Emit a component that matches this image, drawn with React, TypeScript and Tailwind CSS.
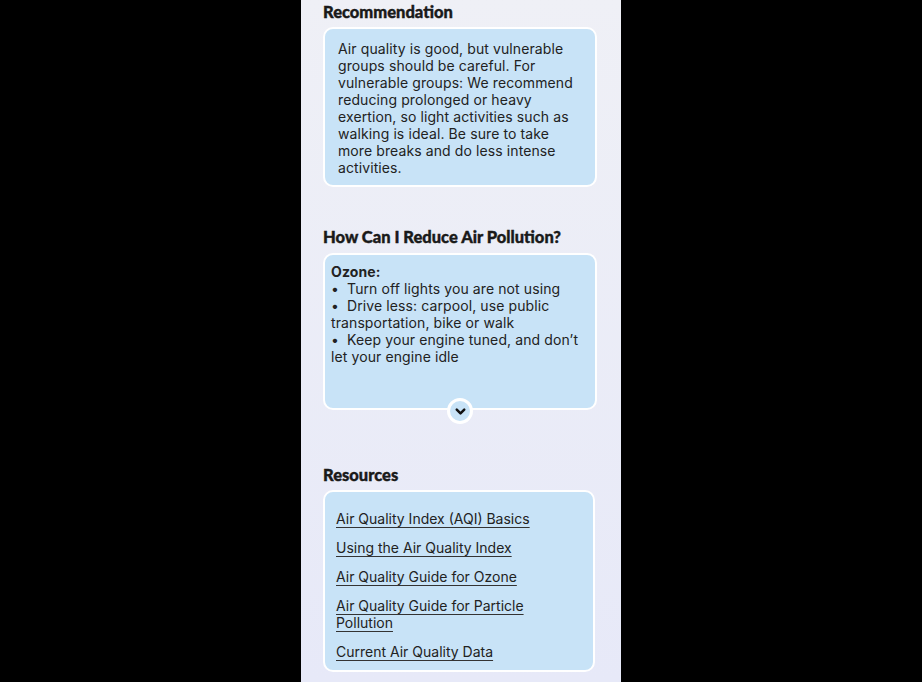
import { ChevronDown } from 'lucide-react';

const heading = "font-['Lato',sans-serif] font-black text-[16.5px] leading-6 text-[#1a1a1a] [-webkit-text-stroke:0.4px_#1a1a1a]";
const card = "bg-[#c8e3f7] border-2 border-white rounded-[10px] text-[14px] leading-[17px] text-[#222]";

const links = [
  'Air Quality Index (AQI) Basics',
  'Using the Air Quality Index',
  'Air Quality Guide for Ozone',
  'Air Quality Guide for Particle Pollution',
  'Current Air Quality Data',
];

const tips = [
  'Turn off lights you are not using',
  'Drive less: carpool, use public transportation, bike or walk',
  'Keep your engine tuned, and don’t let your engine idle',
];

export default function App() {
  return (
    <div className="w-full h-[682px] bg-black flex justify-center overflow-hidden font-['Inter',sans-serif]">
      <div className="w-[320px] h-full bg-gradient-to-b from-[#eff0f6] to-[#e7e9f8] pl-[22px] pr-[24px]">
        <h2 className={heading}>Recommendation</h2>
        <div className={`${card} tracking-[0.1px] mt-[3px] pt-[11px] pb-[9px] pl-[13px] pr-[13px]`}>
          Air quality is good, but vulnerable groups should be careful. For vulnerable groups: We
          recommend reducing prolonged or heavy exertion, so light activities such as walking is
          ideal. Be sure to take more breaks and do less intense activities.
        </div>

        <h2 className={`${heading} mt-[38px]`}>How Can I Reduce Air Pollution?</h2>
        <div className={`${card} tracking-[0.1px] relative mt-[4px] h-[157px] pt-[8px] px-[6px]`}>
          <p className="font-bold">Ozone:</p>
          {tips.map((t) => (
            <p key={t}>{`•\u00a0\u00a0${t}`}</p>
          ))}
          <button className="absolute left-1/2 -translate-x-1/2 -bottom-[16px] w-[26px] h-[26px] rounded-full bg-[#c8e3f7] border-[3px] border-white flex items-center justify-center">
            <ChevronDown size={15} strokeWidth={4} className="text-[#111] mt-[1px]" />
          </button>
        </div>

        <h2 className={`${heading} mt-[53px]`}>Resources</h2>
        <div className={`${card} mt-[3px] w-[272px] pt-[18px] pb-[10px] pl-[11px] pr-[20px] flex flex-col gap-[12px]`}>
          {links.map((l) => (
            <a
              key={l}
              href="#"
              className="underline decoration-[#333] decoration-1 underline-offset-[3px] text-[#222]"
            >
              {l}
            </a>
          ))}
        </div>
      </div>
    </div>
  );
}
